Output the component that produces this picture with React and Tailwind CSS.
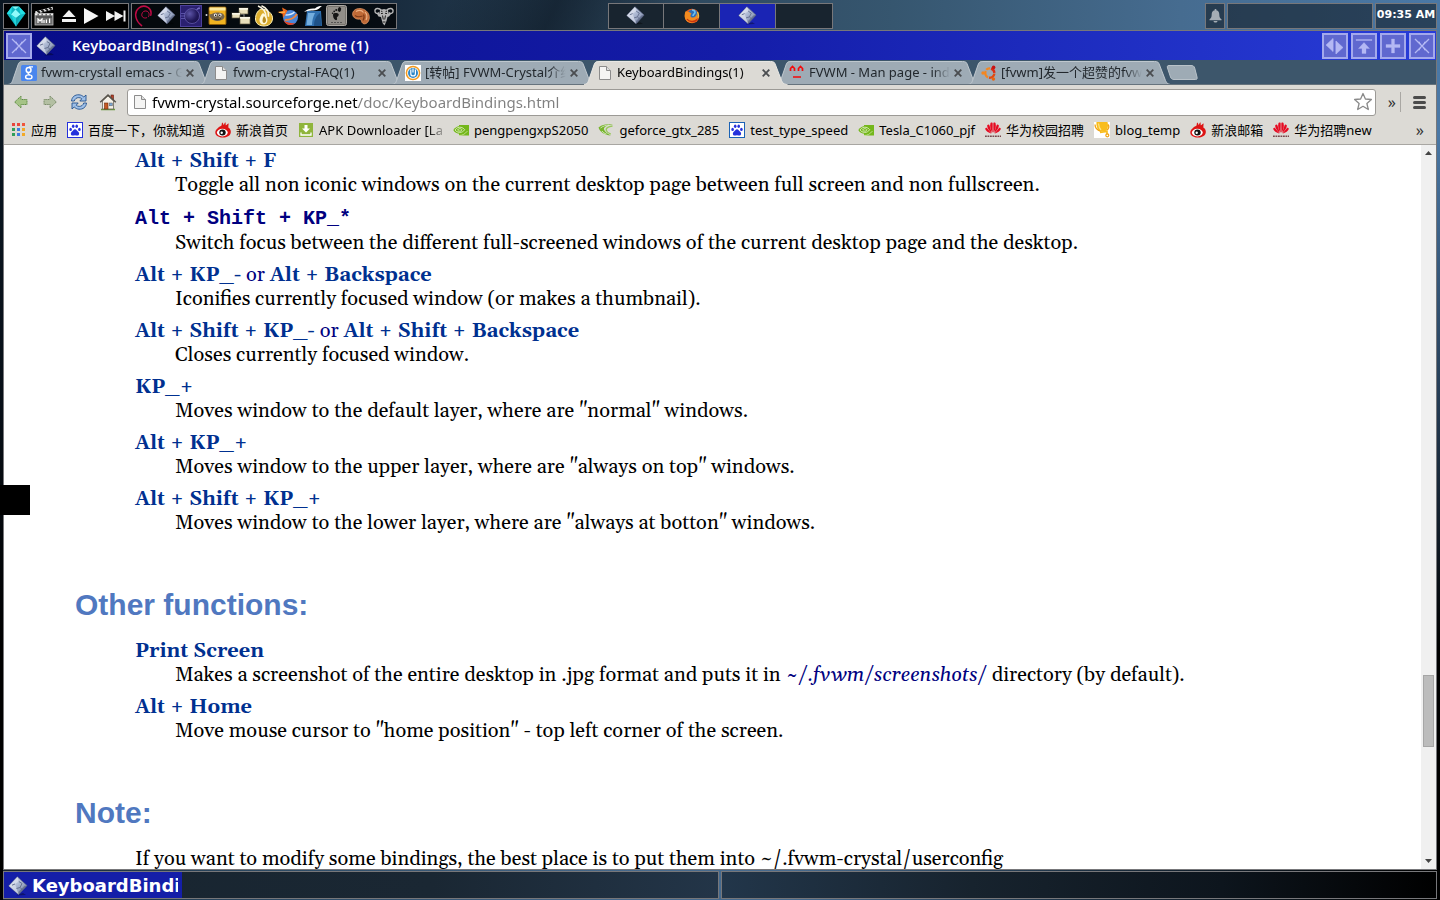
import React from 'react';

const ui = "font-['Noto_Sans','Noto_Sans_CJK_SC',sans-serif]";

function Diamond({ size = 20, id }) {
  return (
    <svg width={size} height={size} viewBox="0 0 20 20" aria-hidden="true" className="shrink-0">
      <defs>
        <linearGradient id={id} x1="0" y1="0" x2="1" y2="1">
          <stop offset="0" stopColor="#eef1f8" />
          <stop offset=".5" stopColor="#a9b5d0" />
          <stop offset="1" stopColor="#6e7a98" />
        </linearGradient>
      </defs>
      <path d="M10 18.5 15 17 18 19 8 19.5Z" fill="#000" opacity=".35" />
      <path d="M9.4.8 19 9.6 10.6 18.6.8 9.9Z" fill={`url(#${id})`} stroke="#5a6484" strokeWidth=".7" />
      <path d="M9.4.8 10.8 5.5 7 8 8.5 12.5 10.6 18.6.8 9.9Z" fill="#dfe4f0" opacity=".65" />
      <path d="M10.8 5.5 14 7.5 12 11.5 8.5 12.5M4 9.2l3-1.2M12 11.5l2.2 2" stroke="#66718f" strokeWidth="1" fill="none" />
      <path d="M10.6 18.6 19 9.6 16.5 9.8 10.6 15.8Z" fill="#525d7c" opacity=".6" />
    </svg>
  );
}

function Crystal() {
  return (
    <svg width="20" height="22" viewBox="0 0 20 22" aria-hidden="true">
      <path d="M6 1.5h7l6.5 7L10 21.5.8 8.5Z" fill="#10b9c4" />
      <path d="M6 1.5 9.5 4.5 13 1.5Z" fill="#7df5f4" />
      <path d="M6 1.5 5 9.5.8 8.5ZM13 1.5l1.5 8 5-1Z" fill="#25e0e4" />
      <path d="M9.5 4.5 5 9.5 10 13l4.500-3.500Z" fill="#8ffafa" />
      <path d="M5 9.5 10 21.5 10 13Z" fill="#22d5dc" />
      <path d="M14.5 9.5 10 21.5 10 13Z" fill="#12a6b2" />
    </svg>
  );
}

function Clapper() {
  return (
    <svg width="20" height="20" viewBox="0 0 20 20" aria-hidden="true">
      <rect x="1" y="7.5" width="18" height="11.5" fill="#6e6e6e" stroke="#bdbdbd" strokeWidth=".8" />
      <path d="M1 5.4 18.5.8l.6 2.6L1.6 8Z" fill="#e4e4e4" />
      <path d="M3.4 4.7 6 6.8M7.4 3.7 10 5.8M11.4 2.6l2.6 2.1M15.2 1.6l2.4 2" stroke="#181818" strokeWidth="1.9" />
      <path d="M1 8.5h18" stroke="#eee" strokeWidth="1.6" strokeDasharray="2.4 1.6" />
      <path d="M4 17v-4l2 2 2-2v4M10 17v-3M12.4 17v-3.4M15.600 12.400V17" stroke="#fff" strokeWidth="1.200" fill="none" />
      <path d="M2 11h16" stroke="#333" strokeWidth=".8" />
    </svg>
  );
}

function Eject() {
  return (
    <svg width="16" height="16" viewBox="0 0 16 16" aria-hidden="true" fill="#f2f2f2">
      <path d="M8 2 14.500 9h-13Z" />
      <rect x="1" y="11" width="14" height="3" />
    </svg>
  );
}

function Play() {
  return (
    <svg width="16" height="18" viewBox="0 0 16 18" aria-hidden="true">
      <path d="M1 1 15.5 9 1 17Z" fill="#f6f6f6" />
    </svg>
  );
}

function Skip() {
  return (
    <svg width="20" height="14" viewBox="0 0 20 14" aria-hidden="true" fill="#f2f2f2">
      <path d="M0 2 9 7 0 12ZM8.5 2l9 5-9 5ZM17.5 1.5h2v11h-2Z" />
    </svg>
  );
}

function Debian() {
  return (
    <svg width="20" height="22" viewBox="0 0 20 22" aria-hidden="true" fill="none" stroke="#c00a45" strokeLinecap="round">
      <path d="M12.600 12.800c-3 1-5.200-1-4.800-3.600.4-2.400 2.800-3.900 5.200-3 2.300 1 2.800 3.800 1.400 5.600" strokeWidth="1" />
      <path d="M16.800 10.200c.8-3.400-.2-6.200-2.800-7.900C11.200.8 7.200 1 4.600 3.200 2 5.400 1.200 9 2 12.400c.8 3.400 2.900 6.200 5.600 8.200" strokeWidth="1.500" />
    </svg>
  );
}

function Eclipse() {
  return (
    <svg width="22" height="22" viewBox="0 0 22 22" aria-hidden="true">
      <defs>
        <radialGradient id="eclipse-orb" cx=".35" cy=".35" r=".8">
          <stop offset="0" stopColor="#5d55a8" />
          <stop offset=".6" stopColor="#231a5c" />
          <stop offset="1" stopColor="#150e40" />
        </radialGradient>
      </defs>
      <rect x=".5" y=".5" width="21" height="21" fill="#2a2070" stroke="#4a3f9a" />
      <circle cx="12" cy="11" r="7.500" fill="url(#eclipse-orb)" stroke="#6a61b6" strokeWidth=".7" />
      <path d="M0 11h5M1 8.500h4M1 13.500h4" stroke="#6f67bd" strokeWidth=".7" />
      <path d="M16.500 5 20 1.500M17 4l3-.5" stroke="#8c84da" strokeWidth=".8" />
    </svg>
  );
}

function Gimpish() {
  return (
    <svg width="22" height="20" viewBox="0 0 22 20" aria-hidden="true">
      <rect x="4" y="1" width="17" height="17.500" rx="1" fill="#f1b321" stroke="#8a5a08" />
      <rect x="4.500" y="1.500" width="16" height="3" fill="#fbe9a0" />
      <path d="M4 8c3 1 4-1.500 8-1.500s7 1 7.500 3.500-3 5-7 5S4.500 12.500 4 8Z" fill="#75664c" />
      <circle cx="10.500" cy="9" r="1.600" fill="#fff" />
      <circle cx="15" cy="9" r="1.600" fill="#fff" />
      <circle cx="10.700" cy="9.200" r=".8" />
      <circle cx="14.800" cy="9.200" r=".8" />
      <path d="M9 13c2 1 5 1 7-.5" stroke="#2e2616" strokeWidth=".8" fill="none" />
      <circle cx="1.500" cy="9" r="1" fill="#ddd" />
    </svg>
  );
}

function Windows() {
  return (
    <svg width="20" height="18" viewBox="0 0 20 18" aria-hidden="true">
      <path d="M5 10V7h8V5M13 7v5" stroke="#999" fill="none" />
      {[[8, 1, 9, 6], [1, 6, 8, 5], [9, 10, 10, 7]].map(([x, y, w, h]) => (
        <g key={`${x}-${y}`}>
          <rect x={x} y={y} width={w} height={h} fill="#e9dfba" stroke="#5c543c" strokeWidth=".7" />
          <rect x={x} y={y} width={w} height="1.700" fill="#f8f5e6" />
        </g>
      ))}
    </svg>
  );
}

function Emblem() {
  return (
    <svg width="20" height="22" viewBox="0 0 20 22" aria-hidden="true">
      <path d="M7 4c7 0 12 5 11.500 10C18 19 14 21 10 21S1.500 19 1.500 14C1.500 10 3 6 7 4Z" fill="#dcae2e" stroke="#fff2b8" />
      <path d="M4 1c5 2 8 6 8 11M7.500.8c5 2 7.500 6 7 11" stroke="#fbf6e2" strokeWidth="1.500" fill="none" />
      <path d="M9 8c3 2 4.500 4.500 4.500 7S12 19.500 9.500 19.500 5.500 17.500 5.500 15 7 10 9 8Z" fill="#fff8d8" />
      <path d="M10 11c1.500 1.500 2 3 2 4.500S11 18 10 18s-1.500-1-1.500-2.500S9 12.500 10 11Z" fill="#b98d20" />
    </svg>
  );
}

function Globe() {
  return (
    <svg width="22" height="20" viewBox="0 0 22 20" aria-hidden="true">
      <circle cx="13.500" cy="11.500" r="7.500" fill="#4a86d8" />
      <path d="M6.500 14.500c2 4.500 8 6 12 2.500-3 .5-8 0-12-2.500Z" fill="#e8401c" />
      <path d="M8 14c5 0 10-2.500 12-6" stroke="#f4863a" strokeWidth="1.900" fill="none" />
      <path d="M8.500 9c4 0 7-1 9-3" stroke="#dcecff" strokeWidth="1.300" fill="none" />
      <path d="M.5 6 6 5 5 1.500 10.500 4.500 8 9 6 12 5.500 8Z" fill="#f26a1e" />
      <path d="M2 6.500 8 6" stroke="#ffd35a" />
    </svg>
  );
}

function Feather() {
  return (
    <svg width="20" height="22" viewBox="0 0 20 22" aria-hidden="true">
      <path d="M4 6h14l1 15H2Z" fill="#2f6fae" />
      <path d="M5 8h7c-2 4-3 8-3 12H3.500Z" fill="#74aede" />
      <path d="M11 21c0-6 2-10 6-13l1.500 13Z" fill="#1e5288" />
      <path d="M1 7C4 4 8 3 12 3.500 14 1.500 16 1 19 1c-1.500 1-2.500 2.500-4.500 3.500C11 6 6 5 1 7Z" fill="#fff" />
    </svg>
  );
}

function Foot() {
  return (
    <svg width="21" height="21" viewBox="0 0 21 21" aria-hidden="true">
      <rect x=".5" y=".5" width="20" height="20" rx="2" fill="#77746f" stroke="#aaa7a2" />
      <rect x="2" y="2" width="17" height="17" fill="#918e89" />
      <path d="M7 10c0-2 3-2.500 5-1.500 1.500 1 .5 2.500-.8 3.500-1 .8.500 1.500-.3 2.800-1 1.400-3.900-.8-3.900-4.800Z" fill="#151515" />
      <ellipse cx="13.500" cy="4.500" rx="1.600" ry="2.400" fill="#151515" transform="rotate(15 13.500 4.500)" />
      <circle cx="10.300" cy="5" r="1.100" fill="#151515" />
      <circle cx="8.200" cy="6.300" r=".9" fill="#151515" />
      <circle cx="6.600" cy="8.200" r=".8" fill="#151515" />
      <path d="M5 17.500h11" stroke="#444" strokeWidth=".8" strokeDasharray="2 1" />
    </svg>
  );
}

function Shell() {
  return (
    <svg width="20" height="18" viewBox="0 0 20 18" aria-hidden="true">
      <path d="M2 5C4 1 10 .5 14 3c4 2.500 5.500 7 3.500 11-1 2.500-4 3.500-5.500 2.500-2-1.200-1-3.500-3-4.500C5.500 13 0 10 2 5Z" fill="#bf6a37" stroke="#e39a68" strokeWidth=".7" />
      <path d="M5 4.500c3-1.500 6-1 7.500 1M14 5c2 2 2.500 5 1 8" stroke="#eeb184" strokeWidth="1.200" fill="none" />
      <path d="M4 8.500c2 1.500 5 1.500 7.500.500M12.500 7.500c1 2 .8 4-.5 6" stroke="#7d3a18" strokeWidth="1.100" fill="none" />
    </svg>
  );
}

function Gnu() {
  return (
    <svg width="20" height="20" viewBox="0 0 20 20" aria-hidden="true">
      <path d="M7.500 4.500C5 1.500 1 2 .9 5c0 2.500 3 3.200 4.300 1.500M12.500 4.500C15 1.500 19 2 19.100 5c0 2.500-3 3.200-4.300 1.500" fill="none" stroke="#b9b9b9" strokeWidth="1.300" />
      <path d="M6 4 10 3l4 1 .5 3.500 2.500.5-2 2.500-1.500.5-1 4L10.500 19.500 8.500 17 7 11 4.500 10.500 3 8l2.500-.5Z" fill="#b4b4b4" />
      <path d="M7 7.500h1.800M11.200 7.500H13M8.500 9.500l.8 4M11.500 9.500l-.8 4M8.500 16h3M7 5l1.500.8M13 5l-1.500.8" stroke="#222" strokeWidth="1" fill="none" />
    </svg>
  );
}

function Firefox() {
  return (
    <svg width="16" height="16" viewBox="0 0 16 16" aria-hidden="true">
      <circle cx="8" cy="8" r="7.300" fill="#e8601c" />
      <circle cx="8.800" cy="6.600" r="5.200" fill="#2d6fb8" />
      <path d="M8 2c2 0 3 1 3 2.500S9 6 9 8" stroke="#6fc0ee" strokeWidth="1.600" fill="none" />
      <path d="M1.500 3.500C2.500 3 3 3.500 4 4c2-.5 2.500 1 3.500 1.500C6 7 6 9 8 9.500c2.500.5 4-1 5-4 1.500 3-.5 8.500-5 9.300C3.500 15 .5 11.500.7 8c0-2 .3-3.500.8-4.500Z" fill="#f38b1f" />
      <path d="M3 11c2 3 7 3.500 10 .5" stroke="#c7340f" strokeWidth="1.300" fill="none" />
      <path d="M13.500 4c1 2 1.200 4 .5 6" stroke="#fbc935" strokeWidth="1.200" fill="none" />
    </svg>
  );
}

function Bell() {
  return (
    <svg width="13" height="14" viewBox="0 0 13 14" aria-hidden="true" fill="#a5adb5">
      <path d="M5.700 0h1.600v1.300C9.500 1.700 10.300 3.500 10.300 5.500c0 2.600.7 3.800 2.200 4.700v1H.5v-1c1.500-.9 2.200-2.100 2.200-4.700 0-2 .8-3.800 3-4.200ZM4.500 12h4c-.3 2-3.700 2-4 0Z" />
    </svg>
  );
}

function PageIcon() {
  return (
    <svg width="16" height="16" viewBox="0 0 16 16" aria-hidden="true" className="shrink-0">
      <path d="M2.500 1.500h7l4 4v9h-11Z" fill="#f4f4f3" stroke="#8c8c8c" />
      <path d="M9.500 1.500v4h4" fill="#dedede" stroke="#8c8c8c" />
    </svg>
  );
}

function GoogleIcon() {
  return (
    <svg width="16" height="16" viewBox="0 0 16 16" aria-hidden="true" className="shrink-0">
      <rect width="16" height="16" rx="1.500" fill="#4a86ee" />
      <ellipse cx="7.600" cy="5" rx="2.400" ry="2.500" fill="none" stroke="#fff" strokeWidth="1.500" />
      <path d="M8 1.900h4M8 7.800c-1.800.8-.5 1.600.8 2" fill="none" stroke="#fff" strokeWidth="1.300" />
      <ellipse cx="7.800" cy="11.900" rx="3.200" ry="2" fill="none" stroke="#fff" strokeWidth="1.400" />
    </svg>
  );
}

function RingU() {
  return (
    <svg width="16" height="16" viewBox="0 0 16 16" aria-hidden="true" className="shrink-0">
      <rect width="16" height="16" fill="#fff" />
      <circle cx="8" cy="8" r="6.600" fill="none" stroke="#f29a1f" strokeWidth="1.500" />
      <circle cx="8" cy="8" r="5" fill="#2c86c6" />
      <path d="M5.800 4.500v4.200c0 3 4.600 3 4.600 0V4.500M8 3.500v4" stroke="#fff" strokeWidth="1.200" fill="none" />
    </svg>
  );
}

function CaretFace() {
  return (
    <svg width="16" height="16" viewBox="0 0 16 16" aria-hidden="true" className="shrink-0" fill="none" stroke="#f30b0b" strokeWidth="1.700">
      <path d="M1.500 6V3.500L3.500 1.500 5.500 3.500V6M9.500 6V3.500L11.500 1.500 13.500 3.500V6M4 12h8" />
    </svg>
  );
}

function Ubuntu() {
  return (
    <svg width="16" height="16" viewBox="0 0 16 16" aria-hidden="true" className="shrink-0">
      <path d="M5.200 4.800A4.600 4.600 0 0 1 9 3.400" stroke="#f4861f" strokeWidth="2.300" fill="none" />
      <path d="M10 3.600A4.700 4.700 0 0 1 13.400 7.800" stroke="#dd2b12" strokeWidth="2.300" fill="none" />
      <path d="M13.400 8.700A4.700 4.700 0 0 1 8 12.700" stroke="#e04a12" strokeWidth="2.300" fill="none" />
      <path d="M7 12.400A4.600 4.600 0 0 1 4.800 6" stroke="#f4861f" strokeWidth="2.300" fill="none" />
      <circle cx="2" cy="8" r="1.700" fill="#f4861f" />
      <circle cx="12.600" cy="2.400" r="1.800" fill="#c81414" />
      <circle cx="12.400" cy="14" r="1.700" fill="#e8650f" />
    </svg>
  );
}

function AppsGrid() {
  const colors = ['#e8453c', '#e8453c', '#f0553c', '#2f9e58', '#3c7de0', '#f2a928', '#2f9e58', '#3c7de0', '#f2a928'];
  return (
    <svg width="16" height="16" viewBox="0 0 16 16" aria-hidden="true" className="shrink-0">
      {colors.map((c, i) => (
        <rect key={i} x={2 + (i % 3) * 5} y={1 + Math.floor(i / 3) * 5} width="3" height="3" fill={c} />
      ))}
    </svg>
  );
}

function Paw({ square }) {
  return (
    <svg width="16" height="16" viewBox="0 0 16 16" aria-hidden="true" className="shrink-0">
      <rect x=".5" y=".5" width="15" height="15" fill="#fff" stroke={square} />
      <g fill="#2531dc">
        <ellipse cx="3.600" cy="7.400" rx="1.300" ry="1.700" />
        <ellipse cx="6.200" cy="4.300" rx="1.300" ry="1.800" />
        <ellipse cx="9.700" cy="4.300" rx="1.300" ry="1.800" />
        <ellipse cx="12.400" cy="7.400" rx="1.300" ry="1.700" />
        <path d="M8 7.200c1.500 0 2 1.600 3.200 2.600 1.600 1.300 1 3.800-.8 3.800-1 0-1.500-.3-2.400-.3s-1.400.3-2.400.3c-1.800 0-2.400-2.500-.8-3.800C6 8.800 6.500 7.200 8 7.200Z" />
      </g>
    </svg>
  );
}

function Sina() {
  return (
    <svg width="16" height="16" viewBox="0 0 16 16" aria-hidden="true" className="shrink-0">
      <path d="M3 6C4 4 6 4.500 6.500 3.500 7 2.500 6.500 1 7.500.5c.6 1 .8 1.500 1 2.500C9.500 2.500 9 1 10.500.3c.2 1.400.2 2 .2 3C12 3 12.500 1.500 13.800 1.500c-.5 1.500-.3 2.500-.5 4 2 1 2.900 3.500 2.400 5.500C15 14 11.500 15.700 7.500 15.500 3 15.300.2 13 .3 10.300.4 8.500 1.300 7.200 3 6Z" fill="#dd1414" />
      <ellipse cx="7.300" cy="10.600" rx="5.400" ry="3.800" fill="#fff" />
      <ellipse cx="7.500" cy="10.600" rx="3.200" ry="3" fill="#111" />
      <circle cx="6.700" cy="10.700" r="1.200" fill="#fff" />
    </svg>
  );
}

function Apk() {
  return (
    <svg width="16" height="16" viewBox="0 0 16 16" aria-hidden="true" className="shrink-0">
      <rect x="1" y="1" width="14" height="14" fill="#8fb53c" />
      <path d="M6.500 3h3v3.500H12L8 10.500 4 6.500h2.500Z" fill="#fff" />
      <path d="M3 10.500v2.500h10v-2.500" stroke="#fff" strokeWidth="1.300" fill="none" />
    </svg>
  );
}

function Nvidia() {
  return (
    <svg width="16" height="16" viewBox="0 0 16 16" aria-hidden="true" className="shrink-0">
      <path d="M6 3h10v10.500H6Z" fill="#74b71b" />
      <path d="M.3 8C2.500 4.500 5.500 3.600 8.500 4c2 .4 3.500 1.700 4.800 3.500-1.500 2.600-4 4.300-6.500 4.300C4 11.800 1.500 10.500.3 8Z" fill="#74b71b" />
      <path d="M2 8c1.500-2.300 3.500-3 6-2.700 1.500.3 2.800 1.300 3.700 2.400-1.200 1.700-3 2.800-5 2.700C4.500 10.300 3 9.300 2 8ZM4.500 8c1-1.300 2-1.500 3-1.300.8.200 1.300.8 1.600 1.200-.6.900-1.400 1.300-2.300 1.200C5.800 9.100 5 8.700 4.500 8Z" fill="none" stroke="#e6f2cf" strokeWidth=".8" />
      <path d="M6 13.500c3.500 0 6-1.500 8.500-4.500" fill="none" stroke="#d6eab0" strokeWidth=".7" />
    </svg>
  );
}

function Geforce() {
  return (
    <svg width="16" height="16" viewBox="0 0 16 16" aria-hidden="true" className="shrink-0" fill="none">
      <path d="M.5 5.500C4 2.500 9 1.800 15 2 9.500 3 6.500 4.500 5.800 7c1 3 3.500 4.500 7 6.500C7 13 2 10.500.5 5.500Z" fill="#76b52b" />
      <path d="M14.500 4C10.500 4.500 8 6 8.200 8c.3 1.800 2 3 4.600 4.200" stroke="#98c85c" strokeWidth="1.300" />
      <path d="M2.500 6C5 4 8 3.200 11 3M4 9c1 1.500 2.500 2.500 4.500 3" stroke="#e3f0d0" strokeWidth=".8" />
    </svg>
  );
}

function Huawei() {
  return (
    <svg width="16" height="16" viewBox="0 0 16 16" aria-hidden="true" className="shrink-0">
      <g fill="#e60b22">
        <path d="M7.600 10.800C5.500 8 4.500 4 5.500 1c1.300-.9 2.200-.3 2.200.8Z" />
        <path d="M8.400 10.800C10.500 8 11.500 4 10.500 1 9.200.1 8.300.7 8.300 1.800Z" />
        <path d="M6.900 11C4.500 9.200 2 6 2.200 3.200c1-1 2-.8 2.300.2Z" />
        <path d="M9.100 11c2.400-1.800 4.900-5 4.700-7.800-1-1-2-.8-2.300.2Z" />
        <path d="M6.500 11.500C3.500 11 .6 9 .2 6.500c.6-.9 1.400-.9 2-.3Z" />
        <path d="M9.500 11.500c3-.5 5.900-2.500 6.300-5-.6-.9-1.400-.9-2-.3Z" />
      </g>
      <path d="M0 14.300h16" stroke="#77484c" strokeWidth="1.600" strokeDasharray="1.800 .7" />
    </svg>
  );
}

function Trophy() {
  return (
    <svg width="16" height="16" viewBox="0 0 16 16" aria-hidden="true" className="shrink-0">
      <rect width="16" height="16" fill="#fff" />
      <path d="M2.500 0h11c1 4 .5 8-3 9.800H7C3.500 8.500 2 4 2.500 0Z" fill="#f9bd1d" />
      <path d="M1 2.500C1 6 4 8.500 7 9.500M14 2.500c1.500 2 1 4.500-1.500 6" stroke="#f2a313" strokeWidth="1.300" fill="none" />
      <path d="M6 10.500 13 9.500v3" stroke="#f9bd1d" strokeWidth="1.600" fill="none" />
      <circle cx="13.300" cy="13.300" r="1.500" fill="none" stroke="#f2a313" strokeWidth="1.200" />
      <path d="M4.500 1.500c.3 3 1 5 2.500 6.500" stroke="#fde48a" strokeWidth="1.200" fill="none" />
    </svg>
  );
}

function Arrow({ back }) {
  return (
    <svg width="14" height="14" viewBox="0 0 14 14" aria-hidden="true" className={back ? '' : '-scale-x-100'}>
      <path d="M.7 7 7 1v3.500h6v5H7V13Z" fill={back ? '#a5c386' : '#b3bfa2'} stroke={back ? '#5f8d45' : '#788a68'} strokeWidth="1" strokeDasharray="1.500 .7" />
    </svg>
  );
}

function Reload() {
  return (
    <svg width="18" height="18" viewBox="0 0 18 18" aria-hidden="true" fill="#9fc0e8" stroke="#24528f" strokeWidth=".9" strokeLinejoin="round">
      <path d="M1.500 8C1.800 4 5 1.500 9 1.800c2 .1 3.500 1 4.800 2.200L16 2v6H9.800l2-2.200C11 5 10 4.600 8.800 4.600 6.500 4.500 4.800 6 4.300 8Z" />
      <path d="M16.500 10c-.3 4-3.500 6.500-7.500 6.200-2-.1-3.500-1-4.800-2.200L2 16v-6h6.200l-2 2.200c.8.8 1.800 1.200 3 1.200 2.300.1 4-1.400 4.500-3.400Z" />
    </svg>
  );
}

function Home() {
  return (
    <svg width="18" height="18" viewBox="0 0 18 18" aria-hidden="true">
      <path d="M2 16.500h14" stroke="#6b9a3c" strokeWidth="1.500" />
      <rect x="12" y="2" width="2.500" height="5" fill="#b8432b" stroke="#5c1c10" strokeWidth=".6" />
      <path d="M3.500 8 9 3l5.500 5v8h-11Z" fill="#f4f0e6" stroke="#6a665c" strokeWidth=".8" />
      <path d="M1.200 9.200 9 2l7.800 7.200" fill="none" stroke="#57534b" strokeWidth="1.500" />
      <rect x="5.500" y="10" width="3.500" height="6" fill="#c65a24" stroke="#6d2c0c" strokeWidth=".6" />
      <rect x="10.500" y="10" width="2.800" height="2.800" fill="#7ba7d6" stroke="#555" strokeWidth=".5" />
    </svg>
  );
}

function Star() {
  return (
    <svg width="20" height="20" viewBox="0 0 20 20" aria-hidden="true">
      <path d="M10 1.500 12.400 7l6 .5-4.500 4 1.400 6L10 14.300 4.700 17.500l1.400-6-4.500-4 6-.5Z" fill="#fff" stroke="#8a8a8a" strokeWidth="1.300" strokeLinejoin="round" />
    </svg>
  );
}

const launchers = [
  ['Debian menu', Debian], ['Editor', null], ['Eclipse', Eclipse], ['Image editor', Gimpish], ['Window list', Windows],
  ['Emblem', Emblem], ['Web browser', Globe], ['Office', Feather], ['GNOME', Foot], ['Shell', Shell], ['GNU', Gnu],
];

const players = [['Media', Clapper], ['Eject', Eject], ['Play', Play], ['Next track', Skip]];

const tabs = [
  { title: 'fvwm-crystall emacs - G', icon: <GoogleIcon /> },
  { title: 'fvwm-crystal-FAQ(1)', icon: <PageIcon /> },
  { title: '[转帖] FVWM-Crystal介绍', icon: <RingU /> },
  { title: 'KeyboardBindings(1)', icon: <PageIcon />, active: true },
  { title: 'FVWM - Man page - inde', icon: <CaretFace /> },
  { title: '[fvwm]发一个超赞的fvw', icon: <Ubuntu /> },
];

const bookmarks = [
  ['应用', <AppsGrid />],
  ['百度一下，你就知道', <Paw square="#2531dc" />],
  ['新浪首页', <Sina />],
  ['APK Downloader [La', <Apk />, true],
  ['pengpengxpS2050', <Nvidia />],
  ['geforce_gtx_285', <Geforce />],
  ['test_type_speed', <Paw square="#1b62b5" />],
  ['Tesla_C1060_pjf', <Nvidia />],
  ['华为校园招聘', <Huawei />],
  ['blog_temp', <Trophy />],
  ['新浪邮箱', <Sina />],
  ['华为招聘new', <Huawei />],
];

const B = ({ children }) => <b className="font-bold text-[#003090]">{children}</b>;

const windowBindings = [
  [<B>Alt + Shift + F</B>, 'Toggle all non iconic windows on the current desktop page between full screen and non fullscreen.'],
  [
    <code className="block pt-0.5 font-['Liberation_Mono',monospace] font-bold text-[#000080]">Alt + Shift + KP_*</code>,
    'Switch focus between the different full-screened windows of the current desktop page and the desktop.',
  ],
  [<><B>Alt + KP_-</B> or <B>Alt + Backspace</B></>, 'Iconifies currently focused window (or makes a thumbnail).'],
  [<><B>Alt + Shift + KP_-</B> or <B>Alt + Shift + Backspace</B></>, 'Closes currently focused window.'],
  [<B>KP_+</B>, 'Moves window to the default layer, where are "normal" windows.'],
  [<B>Alt + KP_+</B>, 'Moves window to the upper layer, where are "always on top" windows.'],
  [<B>Alt + Shift + KP_+</B>, 'Moves window to the lower layer, where are "always at botton" windows.'],
];

const otherBindings = [
  [
    <B>Print Screen</B>,
    <>Makes a screenshot of the entire desktop in .jpg format and puts it in <i className="text-[#000080]">~/.fvwm/screenshots/</i> directory (by default).</>,
  ],
  [<B>Alt + Home</B>, 'Move mouse cursor to "home position" - top left corner of the screen.'],
];

function Bindings({ items }) {
  return (
    <dl className="flex flex-col gap-2 pl-[60px]">
      {items.map(([keys, text], i) => (
        <div key={i}>
          <dt className="text-[#000080]">{keys}</dt>
          <dd className="pl-10">{text}</dd>
        </div>
      ))}
    </dl>
  );
}

function Heading({ children }) {
  return <h2 className="mt-[52px] mb-4 font-['Liberation_Sans',sans-serif] text-[30px] leading-9 font-bold text-[#5078c0]">{children}</h2>;
}

function Tab({ title, icon, active }) {
  return (
    <div role="tab" aria-selected={!!active} className={`relative flex h-[25px] w-48 items-center pt-0.5 pr-0.5 pl-[13px] ${active ? 'z-10' : ''}`}>
      <svg aria-hidden="true" className="absolute top-0 left-0 h-full w-[106%]" viewBox="0 0 204 25" preserveAspectRatio="none">
        <path
          d="M0 24.500C4 24 4 22 5.500 18L10 5C11 2 12 1.500 15 1.500H187C190 1.500 191 2 192 5L197 18C198.500 22 199 24 203 24.500Z"
          fill={active ? '#dcdad5' : '#9eabb5'}
          stroke={active ? '#e9e8e4' : '#c0c8ce'}
        />
        <path d="M0 24.500H204" stroke={active ? '#dcdad5' : '#65727c'} />
      </svg>
      <span className="relative mr-1">{icon}</span>
      <span className={`relative min-w-0 flex-1 overflow-hidden text-[13px] whitespace-nowrap [mask-image:linear-gradient(to_right,black_88%,transparent)] ${active ? 'text-black' : 'text-[#22282d]'}`}>
        {title}
      </span>
      <button type="button" aria-label={`Close ${title}`} className="relative flex size-4 items-center justify-center">
        <svg width="8" height="8" viewBox="0 0 8 8" stroke="#4a4d50" strokeWidth="1.800" aria-hidden="true">
          <path d="M.7.7 7.300 7.300M7.300.7.7 7.300" />
        </svg>
      </button>
    </div>
  );
}

function TitleButton({ label, children }) {
  return (
    <button type="button" aria-label={label} className="flex size-[26px] items-center justify-center border-2 border-[#a4a9ec] bg-[#6068cf]">
      <svg width="22" height="22" viewBox="0 0 22 22" fill="#b4b8f4" stroke="#b4b8f4" aria-hidden="true">{children}</svg>
    </button>
  );
}

const closeGlyph = (
  <g fill="none">
    <path d="M4 4 18 18M18 4 4 18" strokeWidth="1.300" />
    <path d="M8 6.500 9.500 9.500M14 6.500 12.500 9.500M8 15.500 9.500 12.500M14 15.500 12.500 12.500" strokeWidth="1" />
  </g>
);

const panel = 'flex items-center border border-[#77777a]';

export default function App() {
  return (
    <div className={`relative flex h-screen flex-col overflow-hidden bg-[linear-gradient(to_bottom,transparent_15%,rgba(4,8,14,.55)_45%,black_72%),linear-gradient(115deg,transparent_24%,rgba(6,14,24,.5)_30%,transparent_37%),linear-gradient(to_right,#0b1722_0%,#16283a_25%,#2b4459_42%,#36566f_62%,#466c90_82%,#4a78a6_100%)] px-[3px] ${ui}`}>
      <header className="grid h-[30px] shrink-0 grid-cols-[1fr_auto_1fr] items-center pt-px">
        <div className="flex gap-0.5">
          <button type="button" aria-label="Main menu" className={`${panel} h-[26px] w-[26px] justify-center bg-black`}>
            <Crystal />
          </button>
          <div className={`${panel} h-[26px] w-[98px] justify-between bg-black px-0.5`}>
            {players.map(([name, Icon]) => (
              <button key={name} type="button" aria-label={name}><Icon /></button>
            ))}
          </div>
          <div className={`${panel} h-[26px] w-[266px] justify-between bg-black/70 px-0.5`}>
            {launchers.map(([name, Icon]) => (
              <button key={name} type="button" aria-label={name}>{Icon ? <Icon /> : <Diamond id="d-launch" size={19} />}</button>
            ))}
          </div>
        </div>
        <nav aria-label="Desktops" className="grid h-[26px] w-[225px] grid-cols-4 divide-x divide-[#77777a] border border-[#77777a] bg-[#18242f]">
          <button type="button" aria-label="Desktop 1" className="flex items-center justify-center"><Diamond id="d-desk1" size={19} /></button>
          <button type="button" aria-label="Desktop 2" className="flex items-center justify-center"><Firefox /></button>
          <button type="button" aria-label="Desktop 3" className="flex items-center justify-center bg-[#1a24b4]"><Diamond id="d-desk3" size={19} /></button>
          <button type="button" aria-label="Desktop 4" />
        </nav>
        <div className="flex justify-end gap-0.5">
          <button type="button" aria-label="Notifications" className={`${panel} h-[26px] w-5 justify-center bg-black/45`}><Bell /></button>
          <div className={`${panel} h-[26px] w-[146px] bg-black/45`} />
          <time className={`${panel} h-[26px] w-[62px] justify-center bg-black/45 font-['DejaVu_Sans',sans-serif] text-[11px] font-bold whitespace-nowrap text-white`}>09:35 AM</time>
        </div>
      </header>

      <main className="flex min-h-0 flex-1 flex-col border border-[#77777a]">
        <div className="flex h-[29px] shrink-0 items-center justify-between bg-linear-to-r from-[#080c88] via-[#141ca8] to-[#283cd8] pr-px pl-0.5">
          <div className="flex items-center gap-1">
            <TitleButton label="Window menu">{closeGlyph}</TitleButton>
            <Diamond id="d-title" />
            <h1 className="pl-3 font-['Open_Sans',sans-serif] text-[15px] font-semibold text-white">KeyboardBIndIngs(1) - Google Chrome (1)</h1>
          </div>
          <div className="flex gap-[3px]">
            <TitleButton label="Resize width"><path d="M9 3.500v13L2 10ZM12 6v13l7-6.500ZM9 3.500v13M12 6v13" strokeWidth=".5" /></TitleButton>
            <TitleButton label="Shade"><path d="M3 4.500h16v1H3ZM11 7.500l5.500 6h-3.500v5H9v-5H5.500Z" strokeWidth=".3" /></TitleButton>
            <TitleButton label="Maximize"><path d="M9.500 4h3v5.500H18v3h-5.500V18h-3v-5.500H4v-3h5.500Z" strokeWidth=".3" /></TitleButton>
            <TitleButton label="Close window">{closeGlyph}</TitleButton>
          </div>
        </div>

        <div className="flex h-[25px] shrink-0 items-center border-b border-[#65727c] bg-[#3d566b] pl-1">
          <div role="tablist" className="flex">
            {tabs.map((tab) => <Tab key={tab.title} {...tab} />)}
          </div>
          <button type="button" aria-label="New tab" className="ml-1.5">
            <svg width="32" height="15" viewBox="0 0 32 15" aria-hidden="true">
              <path d="M3 .5H25C27 .5 28 1 28.700 3L31 12C31.400 14 31 14.500 29.500 14.500H8C6 14.500 5 13.500 4.500 12L1.500 3C1 1 1.500.5 3 .5Z" fill="#9eabb5" stroke="#b9c2c9" />
            </svg>
          </button>
        </div>

        <div className="flex h-[34px] shrink-0 items-center bg-[#dcdad5] pr-2.5 pl-[7px]">
          <div className="flex items-center gap-2.5">
            <button type="button" aria-label="Back" className="flex w-[19px] justify-center"><Arrow back /></button>
            <button type="button" aria-label="Forward" className="flex w-[19px] justify-center"><Arrow /></button>
            <button type="button" aria-label="Reload" className="flex w-[19px] justify-center"><Reload /></button>
            <button type="button" aria-label="Home" className="flex w-[19px] justify-center"><Home /></button>
          </div>
          <form className="ml-2.5 flex h-[27px] min-w-0 flex-1 items-center gap-1 rounded-[3px] border border-[#9c9a96] bg-white pr-0.5 pl-1">
            <PageIcon />
            <input
              type="text"
              aria-label="Address"
              defaultValue="fvwm-crystal.sourceforge.net/doc/KeyboardBindings.html"
              className="min-w-0 flex-1 bg-[linear-gradient(to_right,black_206px,#808080_206px)] bg-clip-text text-[15px] text-transparent caret-black outline-none"
            />
            <button type="button" aria-label="Bookmark this page"><Star /></button>
          </form>
          <button type="button" aria-label="More extensions" className="ml-3 text-base leading-4 text-[#333]">»</button>
          <span className="mx-1 h-5 border-l border-[#a9a7a3]" />
          <button type="button" aria-label="Menu" className="ml-2 flex w-[13px] flex-col gap-0.5">
            <span className="h-[3px] rounded-sm bg-[#4b4b4b]" />
            <span className="h-[3px] rounded-sm bg-[#4b4b4b]" />
            <span className="h-[3px] rounded-sm bg-[#4b4b4b]" />
          </button>
        </div>

        <nav aria-label="Bookmarks" className="flex h-[26px] shrink-0 items-center justify-between border-b border-[#a8a6a2] bg-[#dcdad5] pr-3 pb-1 pl-1.5">
          <div className="flex min-w-0 items-center gap-2.5">
            {bookmarks.map(([label, icon, faded]) => (
              <a key={label} href="#bookmark" className="flex items-center gap-[5px] text-[13px] leading-5 whitespace-nowrap text-black">
                {icon}
                <span className={faded ? '[mask-image:linear-gradient(to_right,black_88%,transparent_104%)]' : ''}>{label}</span>
              </a>
            ))}
          </div>
          <button type="button" aria-label="More bookmarks" className="text-base leading-4 text-[#333]">»</button>
        </nav>

        <div className="flex min-h-0 flex-1 bg-white">
          <article id="page" className="min-w-0 flex-1 overflow-hidden pt-1 pl-[71px] font-['Georgia','Gelasio','Liberation_Serif',serif] text-[20px] leading-6 text-black">
            <Bindings items={windowBindings} />
            <Heading>Other functions:</Heading>
            <Bindings items={otherBindings} />
            <Heading>Note:</Heading>
            <p className="pl-[60px]">If you want to modify some bindings, the best place is to put them into ~/.fvwm-crystal/userconfig</p>
          </article>
          <div role="scrollbar" aria-label="Page" aria-controls="page" aria-valuenow={80} className="flex w-[15px] shrink-0 flex-col items-center bg-[#f0f0f0]">
            <svg width="7" height="4" viewBox="0 0 7 4" className="mt-1.5 mb-auto" aria-hidden="true"><path d="M0 4 3.500 0 7 4Z" fill="#444" /></svg>
            <div className="mb-28 h-[72px] w-[11px] border border-[#a6a6a6] bg-[#bcbcbc]" />
            <svg width="7" height="4" viewBox="0 0 7 4" className="mb-1.5" aria-hidden="true"><path d="M0 0 3.500 4 7 0Z" fill="#444" /></svg>
          </div>
        </div>
      </main>

      <footer className="grid h-[30px] shrink-0 grid-cols-2 gap-0.5 bg-[linear-gradient(to_right,#16222d,#28445c_15%,#466a8e_45%,#466a8e_55%,#1c3042_75%,black)] pt-px pb-[3px]">
        <div className="flex border border-[#77777a] bg-[linear-gradient(to_right,#182530,#1a2733_60%,#233548)]">
          <button type="button" className="flex w-[178px] items-center gap-1 bg-[#141ea8] pr-1 pl-1 pt-0.5 font-['DejaVu_Sans',sans-serif] text-[18px] leading-6 font-bold text-white">
            <Diamond id="d-task" />
            <span className="overflow-hidden whitespace-nowrap">KeyboardBindings</span>
          </button>
        </div>
        <div className="border border-[#77777a] bg-[linear-gradient(to_right,#22364a,#17232e_35%,#0d151d_70%,black)]" />
      </footer>

      <div className="absolute top-[485px] left-0 size-[30px] bg-black" />
    </div>
  );
}
